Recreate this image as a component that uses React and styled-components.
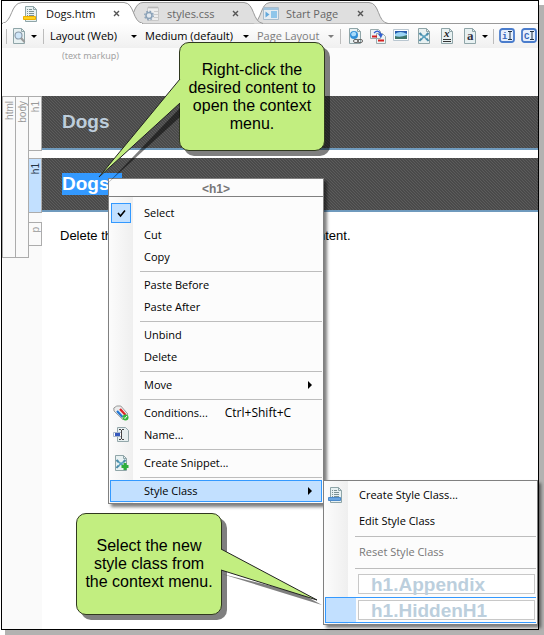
import React from 'react';
import styled, { createGlobalStyle, css } from 'styled-components';

const ui = '"Open Sans", "Noto Sans", sans-serif';
const arial = '"Liberation Sans", Arial, sans-serif';

const Global = createGlobalStyle`
  * { box-sizing: border-box; }
  html, body, #root { margin: 0; height: 100%; }
  body { background: #fff; font: 11px/16px ${ui}; color: #000; overflow: hidden; }
  button, h1, p { margin: 0; padding: 0; font: inherit; color: inherit; }
  button { border: 0; background: none; text-align: left; white-space: nowrap; }
`;

const Page = styled.div`
  position: relative;
  height: 100%;
  padding: 0 5px 5px 1px;
  background: linear-gradient(#b3b2b1, #b3b2b1) 5px 5px no-repeat #fff;
`;
const Window = styled.main`
  height: 100%;
  display: flex;
  flex-direction: column;
  overflow: hidden;
  background: #fff;
  border: 1px solid #000;
`;

const TabBar = styled.nav`
  position: relative;
  display: flex;
  flex: none;
  height: 23px;
  border-bottom: 1px solid #999;
`;
const TabShape = styled.svg`
  position: absolute;
  left: 0;
  top: 0;
  width: 400px;
  height: 23px;
`;
const Tab = styled.div`
  position: relative;
  display: flex;
  align-items: center;
  justify-content: space-between;
  width: ${(p) => p.$width}px;
  padding-top: 3px;
  padding-left: ${(p) => p.$inset}px;
  color: ${(p) => (p.$active ? '#111' : '#666')};
`;
const TabButton = styled.button`
  display: flex;
  align-items: center;
  gap: 7px;
  font-size: 11px;
`;
const CloseButton = styled.button`
  display: flex;
  color: #555;
`;

const Toolbar = styled.div`
  display: flex;
  flex: none;
  align-items: center;
  height: 24px;
  background: linear-gradient(#fefefe, #f0f0f0);
  overflow: hidden;
`;
const Divider = styled.span`
  flex: none;
  width: 1px;
  height: 15px;
  background: #bcbcbc;
  margin: 0 ${(p) => p.$gap || 6}px;
`;
const Drop = styled.button`
  display: flex;
  flex: none;
  align-items: center;
  justify-content: space-between;
  width: ${(p) => p.$width}px;
  margin-right: ${(p) => (p.$last ? 0 : 8)}px;
  color: ${(p) => (p.$dim ? '#7d7d7d' : '#000')};
  font-size: 11px;
  &::after {
    content: '';
    border: 3px solid transparent;
    border-top-color: currentColor;
    border-bottom: 0;
  }
`;
const Tool = styled.button`
  display: flex;
  flex: none;
  margin-right: ${(p) => p.$gap || 7}px;
`;

const Editor = styled.section`
  flex: 1;
  display: flex;
  min-height: 0;
  padding-top: 48px;
  background: linear-gradient(#fcfcfc, #fcfcfc) 0 0 / 100% 48px no-repeat, #fff;
  position: relative;
`;
const Markup = styled.span`
  position: absolute;
  left: 60px;
  top: 1px;
  font: 9px/14px "Noto Sans", sans-serif;
  color: #a3a3a3;
`;
const Structure = styled.div`
  display: flex;
  align-items: flex-start;
  flex: none;
  width: 40px;
  background: #fafafa;
`;
const Block = styled.div`
  width: ${(p) => (p.$first ? 14 : 13)}px;
  height: ${(p) => p.$height}px;
  flex: none;
  padding-top: 4px;
  border: 1px solid #acacac;
  border-left-width: ${(p) => (p.$first ? 1 : 0)}px;
  background: ${(p) => (p.$on ? '#c2e0ff' : '#fafafa')};
  color: ${(p) => (p.$on ? '#234' : '#999')};
  font: 10px/11px ${arial};
  display: flex;
  align-items: center;
  justify-content: flex-start;
  writing-mode: vertical-rl;
`;
const Flip = styled.span`
  transform: rotate(180deg);
`;
const Blocks = styled.div`
  display: flex;
  flex-direction: column;
  gap: ${(p) => p.$gap || 7}px;
`;
const Document = styled.article`
  flex: 1;
  min-width: 0;
`;
const Heading = styled.h1`
  height: 54px;
  margin-bottom: 8px;
  padding: 15px 20px;
  border-bottom: 2px solid #6f9abd;
  background:
    linear-gradient(45deg, #4a4a4a 25%, #5c5c5c 25% 50%, #4a4a4a 50% 75%, #5c5c5c 75%) 0 0 / 3px 3px;
  color: #bdcddb;
  font: bold 19px/22px ${arial};
`;
const Marked = styled.span`
  display: inline-block;
  width: 60px;
  background: #3399ff;
  color: #fff;
`;
const Paragraph = styled.p`
  padding: 8px 18px;
  font: 13px/16px ${arial};
  white-space: nowrap;
`;

const Menu = styled.div`
  position: absolute;
  left: ${(p) => p.$x}px;
  top: ${(p) => p.$y}px;
  width: ${(p) => p.$width}px;
  padding: 0 1px 1px;
  border: 1px solid #808080;
  background: linear-gradient(90deg, #fcfcfc, #efefef) 0 0 / 24px 100% no-repeat, #fcfcfc;
  box-shadow: 3px 3px 3px rgba(0, 0, 0, 0.5);
`;
const MenuTitle = styled.div`
  height: 18px;
  margin: 0 -1px 5px;
  border-bottom: 1px solid #808080;
  background: #fcfcfc;
  color: #777;
  font: bold 12px/20px ${arial};
  text-align: center;
`;
const Item = styled.button`
  display: flex;
  align-items: center;
  width: 100%;
  height: ${(p) => p.$height || 22}px;
  border: 1px solid transparent;
  color: ${(p) => (p.$dim ? '#777' : '#000')};
  ${(p) => p.$on && css`border-color: #3399ff; background: #c2e0ff;`}
`;
const Slot = styled.span`
  display: flex;
  flex: none;
  align-items: center;
  justify-content: center;
  width: 20px;
  height: 20px;
  margin-right: 13px;
  ${(p) => p.$checked && css`border: 1px solid #3399ff; background: #c2e0ff;`}
`;
const Shortcut = styled.span`
  margin-left: 17px;
  font-size: 12px;
`;
const Arrow = styled.span`
  margin-left: auto;
  margin-right: 9px;
  border: 4px solid transparent;
  border-left-color: #000;
  border-right: 0;
`;
const Rule = styled.div`
  height: 1px;
  margin: 3px 0 2px 30px;
  background: #bdbdbd;
`;
const ClassItem = styled.button`
  display: flex;
  width: 100%;
  height: 26px;
  padding: 2px 1px 2px 32px;
  border: solid transparent;
  border-width: 1px 0 1px 1px;
  ${(p) => p.$on && css`
    border-color: #3399ff;
    background: linear-gradient(#c2e0ff, #c2e0ff) 0 0 / 30px 100% no-repeat;
  `}
`;
const ClassName = styled.span`
  flex: 1;
  padding-left: 12px;
  border: 1px solid #c8c8c8;
  background: #fff;
  color: #bccfdd;
  font: bold 19px/19px ${arial};
`;

const Callout = styled.div`
  position: absolute;
  left: ${(p) => p.$x}px;
  top: ${(p) => p.$y}px;
  width: ${(p) => p.$width}px;
  height: ${(p) => p.$height}px;
  display: flex;
  align-items: center;
  justify-content: center;
  border: 1px solid #30391f;
  border-radius: 10px;
  background: #c2ee80;
  box-shadow: 5px 5px 0 rgba(0, 0, 0, 0.5);
  font: 16px/18px ${arial};
  text-align: center;
  white-space: pre-line;
`;
const Pointer = styled.svg`
  position: absolute;
  left: ${(p) => p.$x}px;
  top: ${(p) => p.$y}px;
  pointer-events: none;
`;

const Doc = ({ children }) => (
  <svg width="16" height="16" viewBox="0 0 16 16" fill="none">
    <path d="M2.500 .5h8l3 3v12h-11z" fill="#e8f1f2" stroke="#8fa5a8" />
    <path d="M10.500 .5v3h3" stroke="#8fa5a8" />
    {children}
  </svg>
);
const TextDoc = ({ bar, edge }) => (
  <Doc>
    <path d="M4 3.500h1m1 0h3M4 5.500h1m1 0h5M4 7.500h1m1 0h5M4 9.500h1m1 0h5" stroke="#7d9294" />
    <path d="M.5 10.500h12v3H.5z" fill={bar} stroke={edge} />
  </Doc>
);
const Cross = () => (
  <svg width="7" height="7" viewBox="0 0 7 7" stroke="currentColor" strokeWidth="1.4">
    <path d="M1 1l5 5M6 1L1 6" />
  </svg>
);
const GearDoc = () => (
  <svg width="16" height="16" viewBox="0 0 16 16" fill="none">
    <path d="M3.500 1.500h11v13h-11z" fill="#eee" stroke="#c8c8c8" />
    <path d="M5 .5v2M7 .5v2M9 .5v2M11 .5v2M13 .5v2" stroke="#aaa" />
    <path d="M10 5.500h4M10 8.500h4M10 11.500h4" stroke="#ccc" />
    <circle cx="5" cy="9.500" r="3" fill="#e4e9ee" stroke="#8ba2b8" strokeWidth="1.500" />
    <circle cx="5" cy="9.500" r="4.300" stroke="#8ba2b8" strokeWidth="1.300" strokeDasharray="1.690 1.690" />
  </svg>
);
const StartIcon = () => (
  <svg width="16" height="14" viewBox="0 0 16 14" fill="none">
    <path d="M.5 .5h15v12H.5z" fill="#e6edf2" stroke="#a9bccb" />
    <path d="M1 2h14" stroke="#9fc4df" strokeWidth="2" />
    <path d="M2.500 4.500l4 3-4 3z" fill="#62a8dc" />
    <path d="M8 4h6v7H8z" fill="#8fc6ea" />
  </svg>
);
const SearchDoc = () => (
  <Doc>
    <circle cx="7.500" cy="7.500" r="3.500" fill="#cfe6f8" stroke="#8a9aaa" strokeWidth="1.200" />
    <path d="M10 10l3.500 4" stroke="#9a9a9a" strokeWidth="2" />
  </Doc>
);
const LinkDoc = () => (
  <Doc>
    <circle cx="7" cy="7" r="4" fill="#318fd8" />
    <path d="M4 6q2-3 4-2t1 3-4 1z" fill="#a8dafa" />
    <rect x="6.500" y="11.500" width="5" height="3" rx="1.500" fill="#eee" stroke="#666" />
    <rect x="10.500" y="11.500" width="5" height="3" rx="1.500" stroke="#666" />
  </Doc>
);
const TextLink = () => (
  <svg width="16" height="16" viewBox="0 0 16 16" fill="none">
    <path d="M.5 1.500h8l2 2v7H.5zM6.500 5.500h6l3 3v7h-9z" fill="#eef4f4" stroke="#9aabad" />
    <path d="M4 5q4-4 7 1" stroke="#315fd0" strokeWidth="1.300" />
    <path d="M8 6h5l-2 4z" fill="#315fd0" />
    <path d="M2 8.500h5M8 12.500h6" stroke="#d52020" strokeWidth="2" />
  </svg>
);
const Picture = () => (
  <svg width="16" height="16" viewBox="0 0 16 16">
    <path d="M.5 1.500h15v11H.5z" fill="#fff" stroke="#b9c6d0" />
    <path d="M2 3h12v4H2z" fill="#285cae" />
    <path d="M2 6q5-4 12 0v3H2z" fill="#9ad4f4" />
    <path d="M2 8q5 2 12-1v4H2z" fill="#3f756b" />
  </svg>
);
const SnippetDoc = ({ plus }) => (
  <Doc>
    <path d="M4 5c1 3 5 3 7 7M12 5c-1 3-5 3-7 7" stroke="#5ba2bf" strokeWidth="1.600" />
    <path d="M3.500 13l2-2.500M12.500 13l-2-2.500M3.500 5l2 2M12.500 5l-2 2" stroke="#4a8ba8" strokeWidth="2" />
    {plus && <path d="M12 8v7M8.500 11.500h7" stroke="#2fae3b" strokeWidth="3" />}
  </Doc>
);
const GlyphText = styled.text`
  font: ${(p) => p.$font};
`;
const VarDoc = () => (
  <Doc>
    <GlyphText x="5" y="9" fill="#222" $font="italic bold 11px 'Liberation Serif', serif">x</GlyphText>
    <path d="M4 11.500h8M4 13.500h8" stroke="#333" />
  </Doc>
);
const CharDoc = () => (
  <Doc><GlyphText x="5" y="12" fill="#334" $font="bold 13px 'Liberation Serif', serif">a</GlyphText></Doc>
);
const Badge = ({ label }) => (
  <svg width="16" height="16" viewBox="0 0 16 16" fill="none">
    <rect x="1" y="1" width="14" height="13" rx="2.500" fill="#e6effc" stroke="#4a7ccc" strokeWidth="1.800" />
    <GlyphText x="3" y="11" fill="#3566b8" $font="bold 9px 'Liberation Mono', monospace">{label}</GlyphText>
    <path d="M9 3.500h4M11 3.500v8M9 11.500h4" stroke="#234" />
  </svg>
);
const TagIcon = () => (
  <svg width="16" height="16" viewBox="0 0 16 16">
    <path d="M.8 3l3-2h4l7 8-5 5.500L1 6z" fill="#ececec" stroke="#999" />
    <path d="M4 6l5.500 6" stroke="#2277d3" strokeWidth="2.200" />
    <path d="M7 4l5.500 6" stroke="#dd2328" strokeWidth="2.200" />
    <circle cx="12.500" cy="12.500" r="3" fill="#35b43d" />
    <path d="M11 12.500l1 1 2-2.500" stroke="#fff" fill="none" />
  </svg>
);
const NameIcon = () => (
  <svg width="16" height="16" viewBox="0 0 16 16" fill="none">
    <path d="M4.500 .5h8l3 3v11h-11z" fill="#e6eff0" stroke="#93a7aa" />
    <path d="M.5 5.500h8v4h-8z" fill="#fff" stroke="#a9b7ca" />
    <path d="M2 6h5v3H2z" fill="#3558bd" />
    <path d="M6 2.500h2M9 2.500h2M8.500 3v9M6 12.500h2M9 12.500h2" stroke="#444" />
  </svg>
);
const CheckIcon = () => (
  <svg width="9" height="9" viewBox="0 0 9 9" fill="none">
    <path d="M1 4l2.500 3L8 1.500" stroke="#000" strokeWidth="1.600" />
  </svg>
);

const Entry = ({ icon, children, keys, sub, checked, ...rest }) => (
  <Item role="menuitem" {...rest}>
    <Slot $checked={checked}>{icon}</Slot>
    {children}
    {keys && <Shortcut>{keys}</Shortcut>}
    {sub && <Arrow />}
  </Item>
);

export default function App() {
  return (
    <Page>
      <Global />
      <Window>
        <TabBar>
          <TabShape viewBox="0 0 400 23">
            <path d="M251 22.500C260 20 258 2 268 1.500H367C378 2 375 21 386 22.500" fill="#dfdfdf" stroke="#999" />
            <path d="M127 22.500L133 8Q136 1.500 141 1.500H242C253 2 250 21 261 22.500" fill="#dfdfdf" stroke="#999" />
            <path d="M0 22.500C11 21 8 2 20 1.500H122C133 2 130 21 141 22.500" fill="#fff" stroke="#999" />
            <path d="M1 22.500H140" stroke="#fff" />
          </TabShape>
          <Tab $active $width={118} $inset={21}>
            <TabButton><TextDoc bar="#ffd21d" edge="#eeb000" />Dogs.htm</TabButton>
            <CloseButton aria-label="Close Dogs.htm"><Cross /></CloseButton>
          </Tab>
          <Tab $width={119} $inset={24}>
            <TabButton><GearDoc />styles.css</TabButton>
            <CloseButton aria-label="Close styles.css"><Cross /></CloseButton>
          </Tab>
          <Tab $width={125} $inset={24}>
            <TabButton><StartIcon />Start Page</TabButton>
            <CloseButton aria-label="Close Start Page"><Cross /></CloseButton>
          </Tab>
        </TabBar>
        <Toolbar>
          <Divider $gap={4} />
          <Drop $width={26} $last aria-label="Preview"><SearchDoc /></Drop>
          <Divider />
          <Drop $width={87}>Layout (Web)</Drop>
          <Drop $width={104}>Medium (default)</Drop>
          <Drop $dim $last $width={77}>Page Layout</Drop>
          <Divider />
          <Tool aria-label="Hyperlink"><LinkDoc /></Tool>
          <Tool aria-label="Text link"><TextLink /></Tool>
          <Tool aria-label="Picture"><Picture /></Tool>
          <Tool aria-label="Snippet"><SnippetDoc /></Tool>
          <Tool aria-label="Variable"><VarDoc /></Tool>
          <Drop $width={26} $last aria-label="Character"><CharDoc /></Drop>
          <Divider $gap={5} />
          <Tool $gap={6} aria-label="Index"><Badge label="i" /></Tool>
          <Tool $gap={6} aria-label="Concept"><Badge label="C" /></Tool>
        </Toolbar>
        <Editor>
          <Markup>(text markup)</Markup>
          <Structure>
            <Block $first $height={162}><Flip>html</Flip></Block>
            <Block $height={162}><Flip>body</Flip></Block>
            <Blocks>
              <Block $height={55}><Flip>h1</Flip></Block>
              <Blocks $gap={9}>
                <Block $on $height={55}><Flip>h1</Flip></Block>
                <Block $height={24}><Flip>p</Flip></Block>
              </Blocks>
            </Blocks>
          </Structure>
          <Document>
            <Heading>Dogs</Heading>
            <Heading><Marked>Dogs</Marked></Heading>
            <Paragraph>Delete this text and replace with your own content.</Paragraph>
          </Document>
        </Editor>
      </Window>

      <Menu role="menu" aria-label="h1" $x={108} $y={178} $width={216}>
        <MenuTitle>&lt;h1&gt;</MenuTitle>
        <Entry checked icon={<CheckIcon />}>Select</Entry>
        <Entry>Cut</Entry>
        <Entry>Copy</Entry>
        <Rule />
        <Entry>Paste Before</Entry>
        <Entry>Paste After</Entry>
        <Rule />
        <Entry>Unbind</Entry>
        <Entry>Delete</Entry>
        <Rule />
        <Entry sub>Move</Entry>
        <Rule />
        <Entry icon={<TagIcon />} keys="Ctrl+Shift+C">Conditions...</Entry>
        <Entry icon={<NameIcon />}>Name...</Entry>
        <Rule />
        <Entry icon={<SnippetDoc plus />}>Create Snippet...</Entry>
        <Rule />
        <Entry $on sub>Style Class</Entry>
      </Menu>

      <Menu role="menu" aria-label="Style Class" $x={323} $y={480} $width={215}>
        <Entry $height={28} icon={<TextDoc bar="#6aa5e0" edge="#4c8acb" />}>Create Style Class...</Entry>
        <Entry $height={24}>Edit Style Class</Entry>
        <Rule />
        <Entry $height={26} $dim>Reset Style Class</Entry>
        <Rule />
        <ClassItem role="menuitem"><ClassName>h1.Appendix</ClassName></ClassItem>
        <ClassItem role="menuitem" $on><ClassName>h1.HiddenH1</ClassName></ClassItem>
      </Menu>

      <Callout $x={179} $y={42} $width={146} $height={109}>{'Right-click the\ndesired content to\nopen the context\nmenu.'}</Callout>
      <Pointer $x={98} $y={75} width="90" height="110">
        <path d="M82 33L9 109 82 42z" fill="#000" fillOpacity=".5" />
        <path d="M82 4L1 102 82 28" fill="#c2ee80" stroke="#222" />
      </Pointer>
      <Callout $x={76} $y={513} $width={146} $height={102}>{'Select the new\nstyle class from\nthe context menu.'}</Callout>
      <Pointer $x={220} $y={545} width="105" height="65">
        <path d="M2 29L102 60 80 48z" fill="#000" fillOpacity=".5" />
        <path d="M1 4L97 55 1 25" fill="#c2ee80" stroke="#222" />
      </Pointer>
    </Page>
  );
}
